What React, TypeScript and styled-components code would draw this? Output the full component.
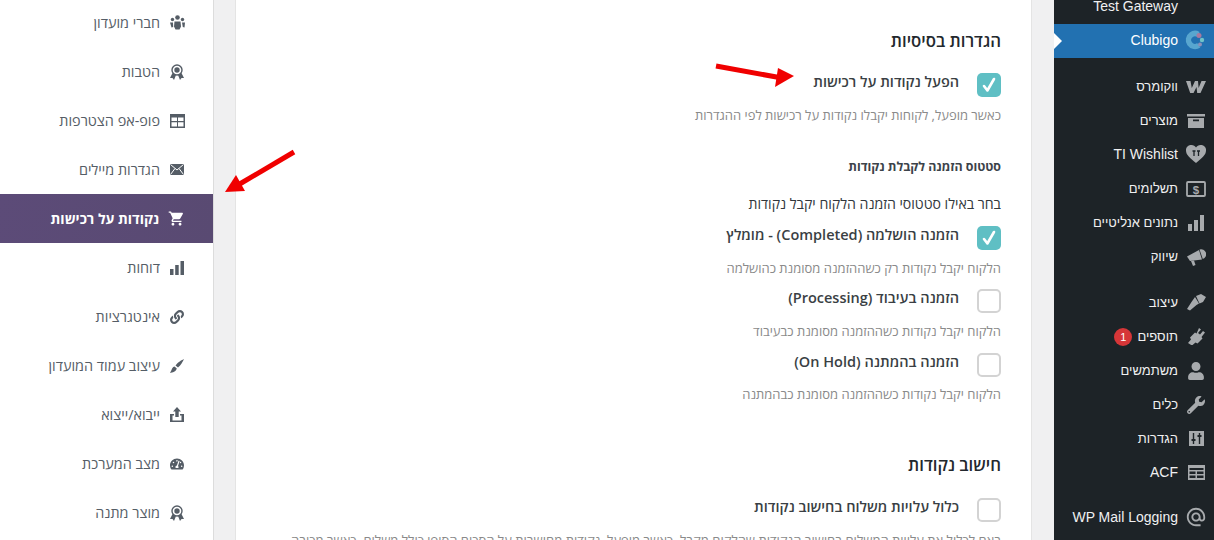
import React from 'react';
import styled, { createGlobalStyle } from 'styled-components';
import { FaLink, FaTachometerAlt, FaUser, FaWrench } from 'react-icons/fa';
import { MdAlternateEmail, MdShoppingCart } from 'react-icons/md';

const GlobalStyle = createGlobalStyle`
  html, body {
    margin: 0;
    padding: 0;
    height: 540px;
    overflow: hidden;
    background: #f0f0f1;
  }
  * { box-sizing: border-box; }
`;

const Page = styled.div`
  position: relative;
  direction: rtl;
  display: flex;
  width: 1214px;
  height: 540px;
  overflow: hidden;
  font-family: 'Open Sans', 'Liberation Sans', sans-serif;
`;

/* wp admin menu */
const AdminMenu = styled.nav`
  flex: 0 0 160px;
  height: 540px;
  background: #1d2327;
  overflow: hidden;
`;
const AdminList = styled.div`
  margin-top: -10px;
`;
const AdminRow = styled.div<{ $active?: boolean; $gap?: number; $hebrew?: boolean }>`
  position: relative;
  display: flex;
  align-items: center;
  height: 34px;
  padding-bottom: ${(p) => (p.$hebrew ? 1 : 2)}px;
  margin-top: ${(p) => p.$gap || 0}px;
  background: ${(p) => (p.$active ? '#2271b1' : 'transparent')};
  color: ${(p) => (p.$active ? '#fff' : '#f0f0f1')};
  font: ${(p) => (p.$hebrew ? '13px' : '14px')}/18px 'Liberation Sans', Arial, sans-serif;
  white-space: nowrap;
  ${(p) =>
    p.$active &&
    `&::after {
      content: '';
      position: absolute;
      left: 0;
      top: 9px;
      border-style: solid;
      border-width: 8px 0 8px 8px;
      border-color: transparent transparent transparent #fff;
    }`}
`;
const AdminIcon = styled.span`
  flex: 0 0 36px;
  display: flex;
  align-items: center;
  justify-content: center;
  color: #a7aaad;
  font-size: 18px;
`;
const Badge = styled.span`
  display: inline-block;
  width: 18px;
  height: 18px;
  margin-right: 5px;
  border-radius: 50%;
  background: #d63638;
  color: #fff;
  font-size: 11px;
  line-height: 18px;
  text-align: center;
`;

/* main column */
const Main = styled.main`
  flex: 1;
  padding: 0 22px 0 21px;
  min-width: 0;
`;
const Card = styled.section`
  height: 560px;
  padding: 31px 30px 0 0;
  background: #fff;
  border-left: 1px solid #e4e4e4;
  border-right: 1px solid #e4e4e4;
  overflow: hidden;
`;
const SectionTitle = styled.h2<{ $top?: number }>`
  margin: ${(p) => p.$top || 0}px 0 0;
  font-size: 16.8px;
  line-height: 20px;
  font-weight: 600;
  color: #23282d;
`;
const SubTitle = styled.h3`
  margin: 35px 0 0;
  font-size: 12.4px;
  line-height: 16px;
  font-weight: 700;
  color: #3c434a;
`;
const Intro = styled.p`
  margin: 20px 0 0;
  font-size: 14.1px;
  line-height: 18px;
  color: #32373c;
`;
const CheckRow = styled.label<{ $top: number }>`
  display: flex;
  align-items: flex-start;
  gap: 18px;
  margin-top: ${(p) => p.$top}px;
`;
const CheckBox = styled.span<{ $on?: boolean }>`
  flex: 0 0 24px;
  display: flex;
  align-items: center;
  justify-content: center;
  width: 24px;
  height: 24px;
  border-radius: 5px;
  background: ${(p) => (p.$on ? '#5fbfc4' : '#fff')};
  border: ${(p) => (p.$on ? 'none' : '2px solid #d3d3d3')};
`;
const CheckLabel = styled.span`
  font-size: 14.5px;
  line-height: 18px;
  font-weight: 600;
  color: #3a3f44;
`;
const Hint = styled.p<{ $top?: number }>`
  margin: ${(p) => p.$top ?? 9}px 0 0;
  font-size: 13px;
  line-height: 18px;
  color: #8a8a8a;
  white-space: nowrap;
`;

/* plugin side nav */
const PluginNav = styled.aside`
  flex: 0 0 214px;
  height: 540px;
  background: #fff;
  border-right: 1px solid #dcdcdc;
  overflow: hidden;
`;
const PluginList = styled.div`
  margin-top: -2px;
`;
const PluginItem = styled.div<{ $active?: boolean }>`
  display: flex;
  align-items: center;
  gap: 9px;
  height: 49px;
  padding-right: 28px;
  background: ${(p) => (p.$active ? 'linear-gradient(100deg, #5c4b78, #594a72)' : 'transparent')};
  color: ${(p) => (p.$active ? '#fff' : '#555d66')};
  font-size: ${(p) => (p.$active ? '14px' : '14.4px')};
  font-weight: ${(p) => (p.$active ? 700 : 400)};
  white-space: nowrap;
`;
const PluginIcon = styled.span`
  flex: 0 0 16px;
  display: flex;
  align-items: center;
  justify-content: center;
  font-size: 16px;
  color: inherit;
`;

/* annotation arrows lying over the page */
const Arrow = styled.svg`
  position: absolute;
  left: 0;
  top: 0;
  width: 1214px;
  height: 540px;
  pointer-events: none;
`;

const Check = () => (
  <svg width="14" height="16" viewBox="0 0 14 16" fill="none">
    <path d="M2 9l3.400 4.500L12 2" stroke="#fff" strokeWidth="2.600" strokeLinecap="round" strokeLinejoin="round" />
  </svg>
);

/* admin menu icons */
const ClubigoIcon = () => (
  <svg width="22" height="22" viewBox="0 0 22 22" fill="none">
    <circle cx="10" cy="11" r="6.500" stroke="#58a6cf" strokeWidth="5.500" strokeDasharray="27 14" transform="rotate(55 10 11)" />
    <circle cx="14" cy="6.500" r="2.500" fill="#a8799f" />
    <circle cx="17" cy="11" r="2.200" fill="#6fc3c9" />
    <circle cx="15" cy="15.500" r="2" fill="#8d90b8" />
  </svg>
);
const WooIcon = () => (
  <svg width="20" height="14" viewBox="0 0 20 14" fill="#a7aaad">
    <path d="M0 1h4.500l1.300 7L9 1h3l.6 7L15.500 1H20l-5.500 12h-3.300L10.500 7l-3 6H4.200z" />
  </svg>
);
const ArchiveIcon = () => (
  <svg width="18" height="14" viewBox="0 0 18 14" fill="#a7aaad">
    <path d="M0 0h18v2.500H0zM1 4h16v10H1zM6 5.500v1.800h6V5.500z" fillRule="evenodd" />
  </svg>
);
const HeartIcon = () => (
  <svg width="20" height="18" viewBox="0 0 20 18">
    <path d="M10 18C4 13 0 10 0 5.500A5 5 0 0 1 5.500 0C7.500 0 9 1 10 2.500 11 1 12.500 0 14.500 0A5 5 0 0 1 20 5.500C20 10 16 13 10 18z" fill="#a7aaad" />
    <path d="M6.500 6h3M8 6v5M11 6h3M12.500 6v5" stroke="#1d2327" strokeWidth="1.300" fill="none" />
  </svg>
);
const PaymentIcon = () => (
  <svg width="20" height="16" viewBox="0 0 20 16" fill="none">
    <rect x="1" y="1" width="18" height="14" rx="1" stroke="#a7aaad" strokeWidth="1.800" />
    <text x="10" y="12.500" textAnchor="middle" fontSize="11.500" fontWeight="700" fontFamily="Liberation Sans" fill="#a7aaad">$</text>
  </svg>
);
const BarsIcon = () => (
  <svg width="16" height="16" viewBox="0 0 16 16" fill="#a7aaad">
    <path d="M0 9h4v7H0zM6 5h4v11H6zM12 0h4v16h-4z" />
  </svg>
);
const MegaphoneIcon = () => (
  <svg width="19" height="18" viewBox="0 0 19 18" fill="#a7aaad">
    <path d="M0 8.500L12 2l3 9.500L3 13z" />
    <path d="M4 13l3-.5 1.500 4.500-2.500 1z" />
    <path d="M12.500 1.500A5 5 0 1 1 15.800 11z" />
  </svg>
);
const AppearanceIcon = () => (
  <svg width="19" height="17" viewBox="0 0 19 17" fill="#a7aaad">
    <path d="M9 2l5-2 5 3-3 5-3.500 1.500zM8 3l4 6.500-2.500 1.500-6.500 5.500-3-1.500 4.500-7z" />
  </svg>
);
const PluginsIcon = () => (
  <svg width="17" height="17" viewBox="0 0 17 17" fill="#a7aaad">
    <path d="M11 0l2 1.500-3 3.500 2 1.500 3-3.500 2 1.500-3.500 4.500 1 1.500-5 5-2-1-3.500 3L0 15l3-3.500-1-2 5-5 1.500 1z" />
  </svg>
);
const SlidersIcon = () => (
  <svg width="15" height="15" viewBox="0 0 15 15">
    <path d="M0 0h15v15H0z" fill="#a7aaad" />
    <path d="M4.500 2v11M10.500 2v11" stroke="#1d2327" strokeWidth="1.400" />
    <path d="M2.500 9h4M8.500 5h4" stroke="#1d2327" strokeWidth="1.800" />
  </svg>
);
const TableIcon = () => (
  <svg width="17" height="15" viewBox="0 0 17 15" fill="#a7aaad">
    <path
      fillRule="evenodd"
      d="M0 0h17v15H0zM1.500 3v2h14V3zM1.500 6.500v2.500h6V6.500zM9 6.500v2.500h6.500V6.500zM1.500 10.500V13h6v-2.500zM9 10.500V13h6.500v-2.500z"
    />
  </svg>
);

/* plugin nav icons */
const MembersIcon = () => (
  <svg width="15" height="15" viewBox="0 0 15 15" fill="currentColor">
    <circle cx="7.500" cy="2.500" r="2.300" />
    <circle cx="2.500" cy="4.500" r="1.700" />
    <circle cx="12.500" cy="4.500" r="1.700" />
    <path d="M4.500 6.500h6l.5 5-1.500 3h-4L4 11.500zM0 7.500h3l.2 4.500-1.700.5zM12 7.500h3l-.5 5-1.700-.5z" />
  </svg>
);
const MedalIcon = () => (
  <svg width="14" height="16" viewBox="0 0 14 16" fill="currentColor">
    <path d="M2.500 9L0 14h2.500l1.500 2L6 11zM11.500 9L14 14h-2.500L10 16 8 11z" />
    <circle cx="7" cy="6" r="5" fill="#fff" stroke="currentColor" strokeWidth="1.400" />
    <circle cx="7" cy="6" r="2.700" />
  </svg>
);
const PopupIcon = () => (
  <svg width="15" height="14" viewBox="0 0 15 14" fill="currentColor">
    <path
      fillRule="evenodd"
      d="M0 0h15v14H0zM1.500 3.500v3.500h5.500V3.500zM8 3.500v3.500h5.500V3.500zM1.500 8.200V12.500h5.500V8.200zM8 8.200V12.500h5.500V8.200z"
    />
  </svg>
);
const MailIcon = () => (
  <svg width="14" height="11" viewBox="0 0 14 11">
    <rect width="14" height="11" fill="currentColor" />
    <path d="M.5.500L7 6l6.500-5.500M.5 10.500L5 4.500M13.500 10.500L9 4.500" stroke="#fff" strokeWidth="1" fill="none" />
  </svg>
);
const ReportsIcon = () => (
  <svg width="14" height="14" viewBox="0 0 14 14" fill="currentColor">
    <path d="M0 8h3.500v6H0zM5.200 4h3.500v10H5.200zM10.500 0H14v14h-3.500z" />
  </svg>
);
const BrushIcon = () => (
  <svg width="14" height="14" viewBox="0 0 14 14" fill="currentColor">
    <path d="M14 0C12 .8 7.500 3.500 5.500 6.500L8 8.500C10.500 6.500 13 2.500 14 0z" />
    <path d="M4.500 7.500c-2 .5-2.500 2-3 3.500L0 14c2.500-.3 6-1.500 6.800-4.500z" />
  </svg>
);
const ExportIcon = () => (
  <svg width="14" height="15" viewBox="0 0 14 15" fill="currentColor">
    <path d="M7 0l4 4.500H8.700V10H5.300V4.500H3z" />
    <path d="M1.500 7H4v1.500H2.500v5h9v-5H10V7h2.500H14v8H0V7z" />
  </svg>
);

const adminRows: { label: string; icon: React.ReactNode; gap?: number; active?: boolean; badge?: string; hebrew?: boolean }[] = [
  { label: 'Test Gateway', icon: null },
  { label: 'Clubigo', icon: <ClubigoIcon />, active: true },
  { label: 'ווקומרס', icon: <WooIcon />, gap: 12, hebrew: true },
  { label: 'מוצרים', icon: <ArchiveIcon />, hebrew: true },
  { label: 'TI Wishlist', icon: <HeartIcon /> },
  { label: 'תשלומים', icon: <PaymentIcon />, hebrew: true },
  { label: 'נתונים אנליטיים', icon: <BarsIcon />, hebrew: true },
  { label: 'שיווק', icon: <MegaphoneIcon />, hebrew: true },
  { label: 'עיצוב', icon: <AppearanceIcon />, gap: 12, hebrew: true },
  { label: 'תוספים', icon: <PluginsIcon />, badge: '1', hebrew: true },
  { label: 'משתמשים', icon: <FaUser />, hebrew: true },
  { label: 'כלים', icon: <FaWrench />, hebrew: true },
  { label: 'הגדרות', icon: <SlidersIcon />, hebrew: true },
  { label: 'ACF', icon: <TableIcon /> },
  { label: 'WP Mail Logging', icon: <MdAlternateEmail size={22} />, gap: 11 },
];

const pluginItems: { label: string; icon: React.ReactNode; active?: boolean }[] = [
  { label: 'חברי מועדון', icon: <MembersIcon /> },
  { label: 'הטבות', icon: <MedalIcon /> },
  { label: 'פופ-אפ הצטרפות', icon: <PopupIcon /> },
  { label: 'הגדרות מיילים', icon: <MailIcon /> },
  { label: 'נקודות על רכישות', icon: <MdShoppingCart size={17} />, active: true },
  { label: 'דוחות', icon: <ReportsIcon /> },
  { label: 'אינטגרציות', icon: <FaLink size={14} /> },
  { label: 'עיצוב עמוד המועדון', icon: <BrushIcon /> },
  { label: 'ייבוא/ייצוא', icon: <ExportIcon /> },
  { label: 'מצב המערכת', icon: <FaTachometerAlt size={14} /> },
  { label: 'מוצר מתנה', icon: <MedalIcon /> },
];

export default function App() {
  return (
    <>
      <GlobalStyle />
      <Page>
        <AdminMenu>
          <AdminList>
            {adminRows.map((row) => (
              <AdminRow key={row.label} $active={row.active} $gap={row.gap} $hebrew={row.hebrew}>
                <AdminIcon>{row.icon}</AdminIcon>
                {row.label}
                {row.badge && <Badge>{row.badge}</Badge>}
              </AdminRow>
            ))}
          </AdminList>
        </AdminMenu>

        <Main>
          <Card>
            <SectionTitle>הגדרות בסיסיות</SectionTitle>
            <CheckRow $top={22}>
              <CheckBox $on>
                <Check />
              </CheckBox>
              <CheckLabel>הפעל נקודות על רכישות</CheckLabel>
            </CheckRow>
            <Hint>כאשר מופעל, לקוחות יקבלו נקודות על רכישות לפי ההגדרות</Hint>

            <SubTitle>סטטוס הזמנה לקבלת נקודות</SubTitle>
            <Intro>בחר באילו סטטוסי הזמנה הלקוח יקבל נקודות</Intro>
            <CheckRow $top={13}>
              <CheckBox $on>
                <Check />
              </CheckBox>
              <CheckLabel>הזמנה הושלמה (Completed) - מומלץ</CheckLabel>
            </CheckRow>
            <Hint>הלקוח יקבל נקודות רק כשההזמנה מסומנת כהושלמה</Hint>
            <CheckRow $top={12}>
              <CheckBox />
              <CheckLabel>הזמנה בעיבוד (Processing)</CheckLabel>
            </CheckRow>
            <Hint>הלקוח יקבל נקודות כשההזמנה מסומנת כבעיבוד</Hint>
            <CheckRow $top={13}>
              <CheckBox />
              <CheckLabel>הזמנה בהמתנה (On Hold)</CheckLabel>
            </CheckRow>
            <Hint $top={8}>הלקוח יקבל נקודות כשההזמנה מסומנת כבהמתנה</Hint>

            <SectionTitle $top={52}>חישוב נקודות</SectionTitle>
            <CheckRow $top={23}>
              <CheckBox />
              <CheckLabel>כלול עלויות משלוח בחישוב נקודות</CheckLabel>
            </CheckRow>
            <Hint>באם לכלול את עלויות המשלוח בחישוב הנקודות שהלקוח מקבל. כאשר מופעל, נקודות מחושבות על הסכום הסופי כולל משלוח. כאשר מכובה</Hint>
          </Card>
        </Main>

        <PluginNav>
          <PluginList>
            {pluginItems.map((item) => (
              <PluginItem key={item.label} $active={item.active}>
                <PluginIcon>{item.icon}</PluginIcon>
                {item.label}
              </PluginItem>
            ))}
          </PluginList>
        </PluginNav>

        <Arrow viewBox="0 0 1214 540">
          <path d="M716 66L782 78" stroke="#f00000" strokeWidth="5" />
          <path d="M794 76L778 68L775 87z" fill="#f00000" />
          <path d="M294 152L238 185" stroke="#f00000" strokeWidth="5" />
          <path d="M225 192L236 175L245 191z" fill="#f00000" />
        </Arrow>
      </Page>
    </>
  );
}
